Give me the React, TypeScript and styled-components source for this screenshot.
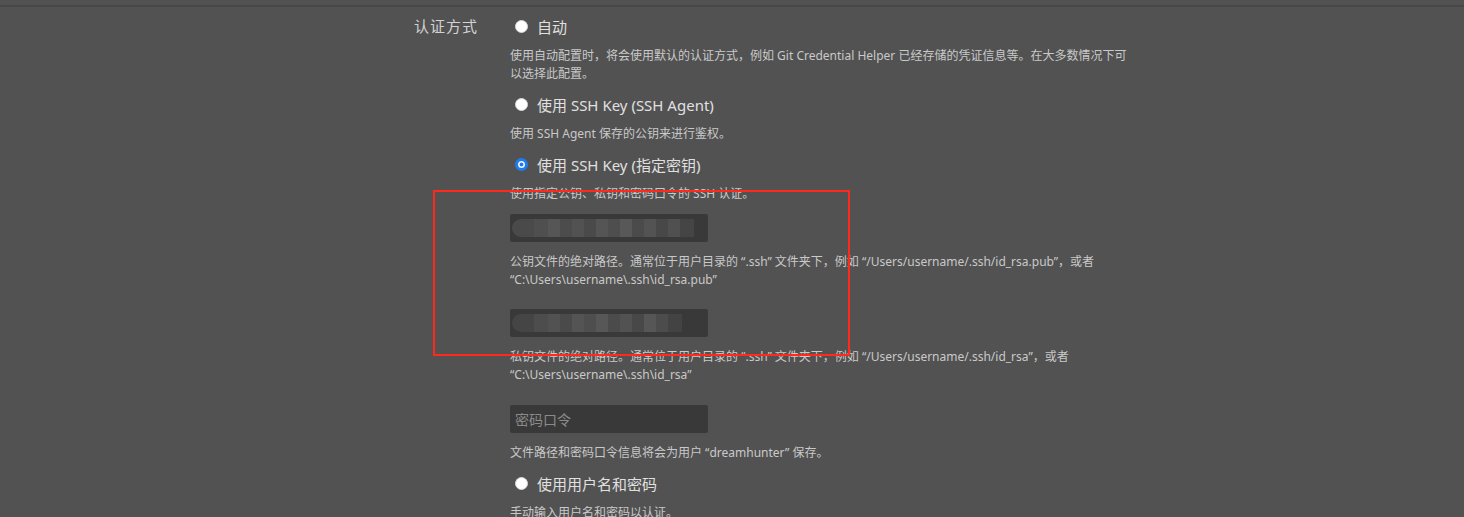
import styled, { createGlobalStyle } from 'styled-components'

const GlobalStyle = createGlobalStyle`
  html, body {
    margin: 0;
    padding: 0;
    background: #525252;
  }
  body {
    font-family: "Noto Sans", "Noto Sans CJK SC", sans-serif;
    color: #d4d4d4;
    overflow: hidden;
  }
`

const Page = styled.div`
  position: relative;
  height: 517px;
  padding-top: 5px;
  box-sizing: border-box;
`

const Divider = styled.div`
  height: 2px;
  background: #474747;
`

const Setting = styled.div`
  display: grid;
  grid-template-columns: 96px 624px;
  margin-left: 414px;
  padding-top: 4px;
`

const SettingLabel = styled.div`
  font-size: 15px;
  line-height: 30px;
  color: #d2d2d2;
  letter-spacing: 1px;
`

const Options = styled.div`
  display: flex;
  flex-direction: column;
`

const RadioRow = styled.label<{ first?: boolean }>`
  display: flex;
  align-items: center;
  gap: 9px;
  height: 30px;
  margin-top: ${(p) => (p.first ? '0' : '6px')};
  padding-left: 5px;
  font-size: 15px;
  color: #e0e0e0;
`

const RadioDot = styled.span<{ checked?: boolean }>`
  width: 13px;
  height: 13px;
  box-sizing: border-box;
  border-radius: 50%;
  flex-shrink: 0;
  background: #ffffff;
  border: ${(p) => (p.checked ? '3px solid #1f7cf0' : '1px solid #d8d8d8')};
  box-shadow: ${(p) => (p.checked ? 'inset 0 0 0 1.5px #ffffff, inset 0 0 0 6px #1f7cf0' : 'none')};
`

const Hint = styled.div<{ gap?: number }>`
  margin-top: ${(p) => p.gap ?? 6}px;
  font-size: 12px;
  line-height: 18px;
  color: #c9c9c9;
`

const Input = styled.div<{ gap?: number }>`
  margin-top: ${(p) => p.gap ?? 11}px;
  width: 198px;
  height: 28px;
  box-sizing: border-box;
  border-radius: 2px;
  background: #393939;
  display: flex;
  align-items: center;
  padding: 0 5px;
  font-size: 14px;
  color: #8a8a8a;
  overflow: hidden;
`

const Mosaic = styled.div`
  display: flex;
  align-items: center;
  height: 18px;
  margin-left: -3px;
  border-radius: 9px 0 0 9px;
  overflow: hidden;
`

const Tile = styled.span<{ w: number }>`
  width: ${(p) => p.w}px;
  height: 100%;
`

const Annotation = styled.div`
  position: absolute;
  left: 433px;
  top: 190px;
  width: 417px;
  height: 166px;
  box-sizing: border-box;
  border: 2px solid #ff2a1c;
  pointer-events: none;
`

const tilesA = [
  ['#4a4a4a', 22], ['#4f4f4f', 14], ['#565656', 12], ['#4c4c4c', 12], ['#525252', 12],
  ['#4a4a4a', 12], ['#555555', 12], ['#4e4e4e', 12], ['#585858', 12], ['#4b4b4b', 12],
  ['#535353', 12], ['#484848', 12], ['#505050', 12], ['#454545', 14],
] as const

const tilesB = [
  ['#454545', 22], ['#4d4d4d', 14], ['#525252', 12], ['#4a4a4a', 12], ['#545454', 12],
  ['#4e4e4e', 12], ['#575757', 12], ['#4b4b4b', 12], ['#525252', 12], ['#484848', 12],
  ['#565656', 12], ['#4c4c4c', 12], ['#434343', 14],
] as const

const Blurred = ({ tiles }: { tiles: readonly (readonly [string, number])[] }) => (
  <Mosaic>
    {tiles.map(([c, w], i) => (
      <Tile key={i} w={w} style={{ background: c }} />
    ))}
  </Mosaic>
)

export default function App() {
  return (
    <>
      <GlobalStyle />
      <Page>
        <Divider />
        <Setting>
          <SettingLabel>认证方式</SettingLabel>
          <Options>
            <RadioRow first>
              <RadioDot />
              自动
            </RadioRow>
            <Hint>
              使用自动配置时，将会使用默认的认证方式，例如 Git Credential Helper 已经存储的凭证信息等。在大多数情况下可以选择此配置。
            </Hint>

            <RadioRow>
              <RadioDot />
              使用 SSH Key (SSH Agent)
            </RadioRow>
            <Hint>使用 SSH Agent 保存的公钥来进行鉴权。</Hint>

            <RadioRow>
              <RadioDot checked />
              使用 SSH Key (指定密钥)
            </RadioRow>
            <Hint>使用指定公钥、私钥和密码口令的 SSH 认证。</Hint>

            <Input>
              <Blurred tiles={tilesA} />
            </Input>
            <Hint gap={11}>
              公钥文件的绝对路径。通常位于用户目录的 “.ssh” 文件夹下，例如 “/Users/username/.ssh/id_rsa.pub”，或者
              <br />
              “C:\Users\username\.ssh\id_rsa.pub”
            </Hint>

            <Input gap={20}>
              <Blurred tiles={tilesB} />
            </Input>
            <Hint gap={11}>
              私钥文件的绝对路径。通常位于用户目录的 “.ssh” 文件夹下，例如 “/Users/username/.ssh/id_rsa”，或者
              <br />
              “C:\Users\username\.ssh\id_rsa”
            </Hint>

            <Input gap={21}>密码口令</Input>
            <Hint gap={11}>文件路径和密码口令信息将会为用户 “dreamhunter” 保存。</Hint>

            <RadioRow>
              <RadioDot />
              使用用户名和密码
            </RadioRow>
            <Hint>手动输入用户名和密码以认证。</Hint>
          </Options>
        </Setting>
        <Annotation />
      </Page>
    </>
  )
}
